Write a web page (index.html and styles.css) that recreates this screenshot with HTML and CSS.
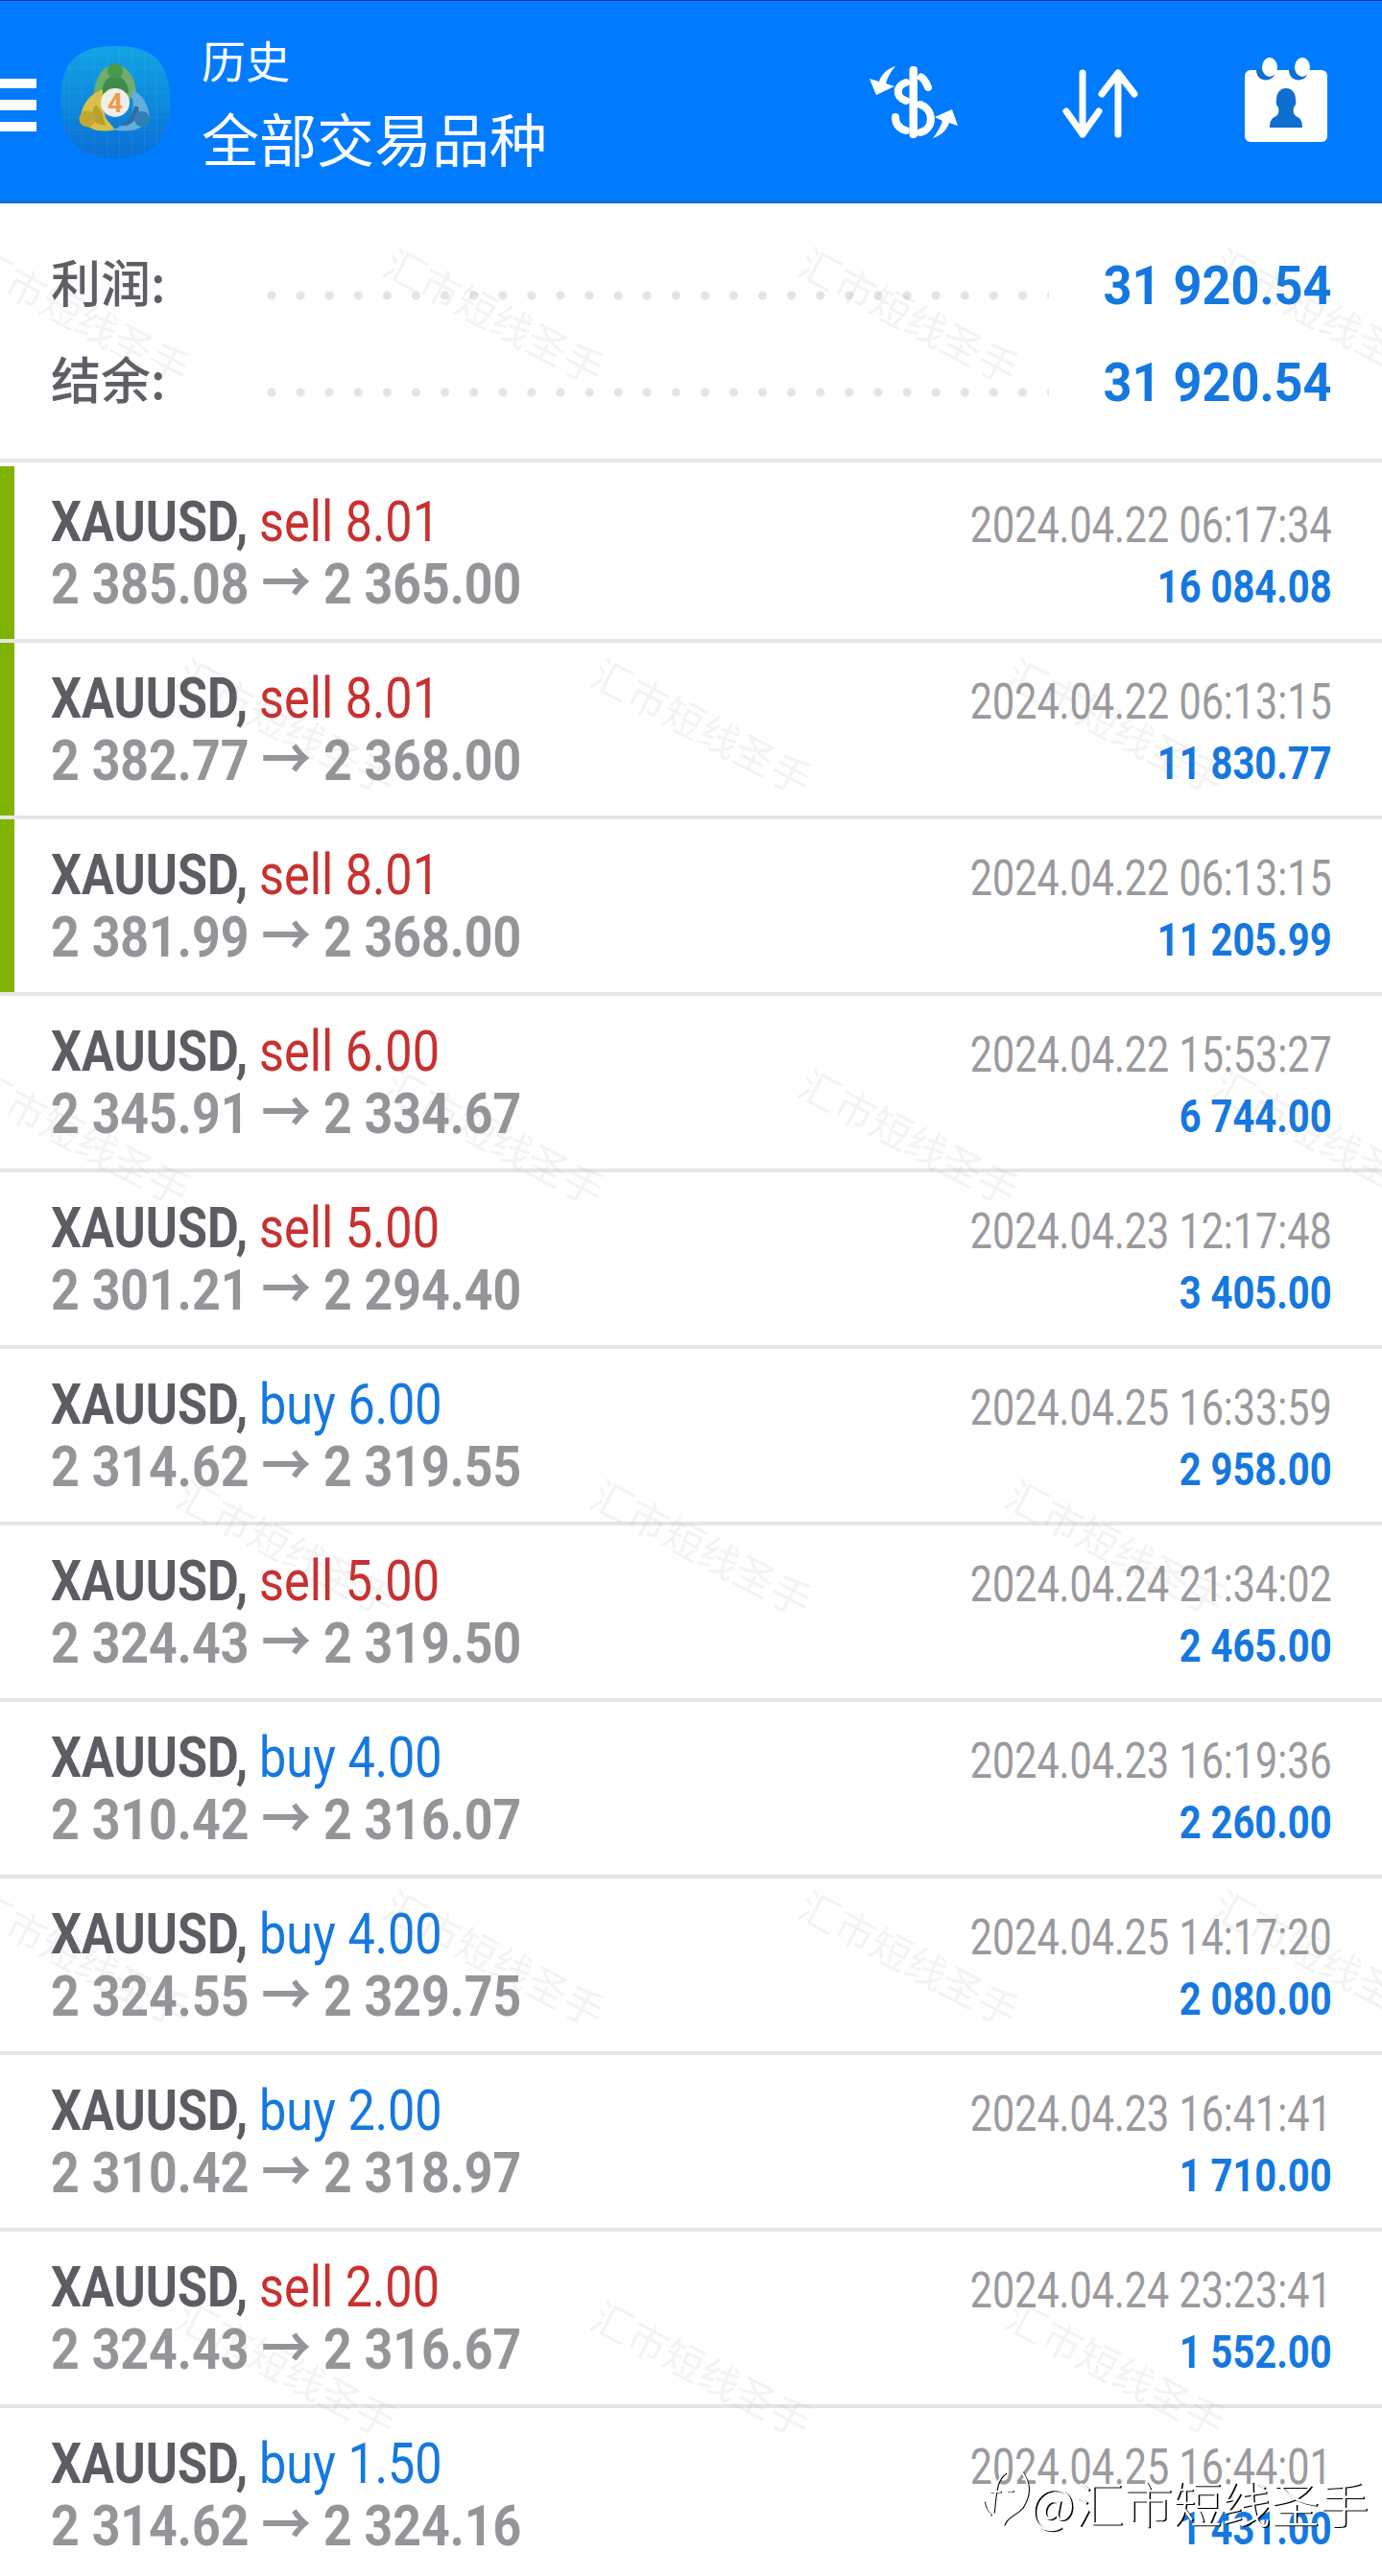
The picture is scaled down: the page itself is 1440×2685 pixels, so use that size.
FILE: index.html
```html
<!DOCTYPE html>
<html lang="zh">
<head>
<meta charset="utf-8">
<title>历史</title>
<link rel="stylesheet" href="styles.css">
</head>
<body>
<header class="topbar">
  <div class="burger"><i></i><i></i><i></i></div>
  <svg class="logo" viewBox="0 0 120 125">
    <defs>
      <linearGradient id="lg" x1="0" y1="0" x2="0" y2="1"><stop offset="0" stop-color="#12a4e4"/><stop offset="1" stop-color="#0a6ed6"/></linearGradient>
      <pattern id="grid" width="13" height="13" patternUnits="userSpaceOnUse"><path d="M13 0V13M0 13H13" stroke="#5cc0ee" stroke-opacity=".22" fill="none"/></pattern>
    </defs>
    <path d="M60 3C100 3 117 20 117 60C117 100 100 120 60 120C20 120 3 100 3 60C3 20 20 3 60 3Z" fill="url(#lg)"/>
    <path d="M60 3C100 3 117 20 117 60C117 100 100 120 60 120C20 120 3 100 3 60C3 20 20 3 60 3Z" fill="url(#grid)"/>
    <path d="M38 54C38 34 50 22 60 22C70 22 82 34 82 54L72 60H48Z" fill="#6fae6c"/>
    <path d="M46 52C46 42 52 34 60 34C68 34 74 42 74 52Z" fill="#3f8c4a"/>
    <circle cx="60" cy="29" r="8" fill="#48994f"/>
    <path d="M47 48C33 53 25 64 24 78C30 90 44 94 60 90L50 78L47 62Z" fill="#d6c04a"/>
    <path d="M40 64C35 70 35 78 41 84L50 86L46 72Z" fill="#b89f2e"/>
    <circle cx="31" cy="79" r="8.500" fill="#c2a733"/>
    <path d="M77 48C88 53 95 64 96 78C90 90 76 94 58 90C70 86 77 78 79 66Z" fill="#64aedb"/>
    <path d="M84 66C86 74 82 82 72 86L66 86C74 80 78 74 80 66Z" fill="#2e6f9e"/>
    <circle cx="88" cy="79" r="8" fill="#2f7fb4"/>
    <circle cx="60" cy="62" r="15" fill="#f1ede8"/>
    <text class="logo-four" x="60" y="72" text-anchor="middle">4</text>
  </svg>
  <div class="titles">
    <div class="title-small">历史</div>
    <div class="title-big">全部交易品种</div>
  </div>
  <svg class="tool tool-dollar" viewBox="0 0 100 90">
    <rect x="47.500" y="9" width="8.500" height="75" rx="4" fill="#fff"/>
    <g fill="none" stroke="#fff" stroke-width="8" stroke-linecap="round">
      <path d="M67 31C65 25 61 21 60 20.500"/>
      <path d="M44 26C34 29 32 41 44 45"/>
      <path d="M59 49C73 54 74 74 59 78"/>
      <path d="M33 62C33 69 37 74 44 76"/>
    </g>
    <path d="M33 9C24 12 18 18 16 25L6 22L13 39L32 30L23 27C25 20 28 15 33 9Z" fill="#fff"/>
    <path d="M72 84C81 81 87 75 89 68L98 71L92 54L74 62L82 66C80 72 77 78 72 84Z" fill="#fff"/>
  </svg>
  <svg class="tool tool-sort" viewBox="0 0 95 90">
    <g fill="none" stroke="#fff" stroke-width="7" stroke-linecap="round" stroke-linejoin="round">
      <path d="M28 16V80M11 56L28 80L45 56"/>
      <path d="M65 80V16M48 38L65 16L82 38"/>
    </g>
  </svg>
  <svg class="tool tool-cal" viewBox="0 0 100 90">
    <rect x="7" y="13" width="86" height="75" rx="6" fill="#fff"/>
    <path d="M19 13C19 27 39 27 39 13ZM53 13C53 27 73 27 73 13Z" fill="#0f6fd0"/>
    <ellipse cx="33" cy="10" rx="8" ry="10" fill="#fff"/>
    <ellipse cx="67" cy="10" rx="8" ry="10" fill="#fff"/>
    <path d="M50 32C57 32 60 38 60 44C61 47 60 50 58 52C57 57 58 60 62 62C66 64 67 68 67 73H33C33 68 34 64 38 62C42 60 43 57 42 52C40 50 39 47 40 44C40 38 43 32 50 32Z" fill="#0f6fd0"/>
  </svg>
</header>

<section class="summary">
  <div class="sum-row">
    <span class="sum-label">利润:</span>
    <span class="dots"></span>
    <span class="sum-value">31 920.54</span>
  </div>
  <div class="sum-row">
    <span class="sum-label">结余:</span>
    <span class="dots"></span>
    <span class="sum-value">31 920.54</span>
  </div>
</section>

<main class="list">
  <article class="row win">
    <div class="flag"></div>
    <div class="left"><div class="line1"><span class="sym">XAUUSD,</span><span class="side sell">sell 8.01</span></div><div class="price">2 385.08 → 2 365.00</div></div>
    <div class="right"><div class="date">2024.04.22 06:17:34</div><div class="profit">16 084.08</div></div>
  </article>
  <article class="row win">
    <div class="flag"></div>
    <div class="left"><div class="line1"><span class="sym">XAUUSD,</span><span class="side sell">sell 8.01</span></div><div class="price">2 382.77 → 2 368.00</div></div>
    <div class="right"><div class="date">2024.04.22 06:13:15</div><div class="profit">11 830.77</div></div>
  </article>
  <article class="row win">
    <div class="flag"></div>
    <div class="left"><div class="line1"><span class="sym">XAUUSD,</span><span class="side sell">sell 8.01</span></div><div class="price">2 381.99 → 2 368.00</div></div>
    <div class="right"><div class="date">2024.04.22 06:13:15</div><div class="profit">11 205.99</div></div>
  </article>
  <article class="row">
    <div class="flag"></div>
    <div class="left"><div class="line1"><span class="sym">XAUUSD,</span><span class="side sell">sell 6.00</span></div><div class="price">2 345.91 → 2 334.67</div></div>
    <div class="right"><div class="date">2024.04.22 15:53:27</div><div class="profit">6 744.00</div></div>
  </article>
  <article class="row">
    <div class="flag"></div>
    <div class="left"><div class="line1"><span class="sym">XAUUSD,</span><span class="side sell">sell 5.00</span></div><div class="price">2 301.21 → 2 294.40</div></div>
    <div class="right"><div class="date">2024.04.23 12:17:48</div><div class="profit">3 405.00</div></div>
  </article>
  <article class="row">
    <div class="flag"></div>
    <div class="left"><div class="line1"><span class="sym">XAUUSD,</span><span class="side buy">buy 6.00</span></div><div class="price">2 314.62 → 2 319.55</div></div>
    <div class="right"><div class="date">2024.04.25 16:33:59</div><div class="profit">2 958.00</div></div>
  </article>
  <article class="row">
    <div class="flag"></div>
    <div class="left"><div class="line1"><span class="sym">XAUUSD,</span><span class="side sell">sell 5.00</span></div><div class="price">2 324.43 → 2 319.50</div></div>
    <div class="right"><div class="date">2024.04.24 21:34:02</div><div class="profit">2 465.00</div></div>
  </article>
  <article class="row">
    <div class="flag"></div>
    <div class="left"><div class="line1"><span class="sym">XAUUSD,</span><span class="side buy">buy 4.00</span></div><div class="price">2 310.42 → 2 316.07</div></div>
    <div class="right"><div class="date">2024.04.23 16:19:36</div><div class="profit">2 260.00</div></div>
  </article>
  <article class="row">
    <div class="flag"></div>
    <div class="left"><div class="line1"><span class="sym">XAUUSD,</span><span class="side buy">buy 4.00</span></div><div class="price">2 324.55 → 2 329.75</div></div>
    <div class="right"><div class="date">2024.04.25 14:17:20</div><div class="profit">2 080.00</div></div>
  </article>
  <article class="row">
    <div class="flag"></div>
    <div class="left"><div class="line1"><span class="sym">XAUUSD,</span><span class="side buy">buy 2.00</span></div><div class="price">2 310.42 → 2 318.97</div></div>
    <div class="right"><div class="date">2024.04.23 16:41:41</div><div class="profit">1 710.00</div></div>
  </article>
  <article class="row">
    <div class="flag"></div>
    <div class="left"><div class="line1"><span class="sym">XAUUSD,</span><span class="side sell">sell 2.00</span></div><div class="price">2 324.43 → 2 316.67</div></div>
    <div class="right"><div class="date">2024.04.24 23:23:41</div><div class="profit">1 552.00</div></div>
  </article>
  <article class="row">
    <div class="flag"></div>
    <div class="left"><div class="line1"><span class="sym">XAUUSD,</span><span class="side buy">buy 1.50</span></div><div class="price">2 314.62 → 2 324.16</div></div>
    <div class="right"><div class="date">2024.04.25 16:44:01</div><div class="profit">1 431.00</div></div>
  </article>
</main>

<div class="marks">
  <div class="mark-row"><span class="mark">汇市短线圣手</span><span class="mark">汇市短线圣手</span><span class="mark">汇市短线圣手</span><span class="mark">汇市短线圣手</span></div>
  <div class="mark-row shift"><span class="mark">汇市短线圣手</span><span class="mark">汇市短线圣手</span><span class="mark">汇市短线圣手</span></div>
  <div class="mark-row"><span class="mark">汇市短线圣手</span><span class="mark">汇市短线圣手</span><span class="mark">汇市短线圣手</span><span class="mark">汇市短线圣手</span></div>
  <div class="mark-row shift"><span class="mark">汇市短线圣手</span><span class="mark">汇市短线圣手</span><span class="mark">汇市短线圣手</span></div>
  <div class="mark-row"><span class="mark">汇市短线圣手</span><span class="mark">汇市短线圣手</span><span class="mark">汇市短线圣手</span><span class="mark">汇市短线圣手</span></div>
  <div class="mark-row shift"><span class="mark">汇市短线圣手</span><span class="mark">汇市短线圣手</span><span class="mark">汇市短线圣手</span></div>
</div>

<div class="credit">
  <svg class="credit-logo" viewBox="0 0 56 70">
    <g class="credit-shadow">
      <path d="M25 5C17 10 15 20 13 45M10 24H20M28 23.500H33M43 4C50 14 52 26 43 40C36 48 26 50 24 58M3 35C4 42 7 46 10 48"/>
    </g>
    <g class="credit-ink">
      <path d="M25 5C17 10 15 20 13 45M10 24H20M28 23.500H33M43 4C50 14 52 26 43 40C36 48 26 50 24 58M3 35C4 42 7 46 10 48"/>
    </g>
  </svg>
  <span class="credit-text">@汇市短线圣手</span>
</div>
</body>
</html>
```

FILE: styles.css
```css
* { box-sizing: border-box; }
html, body { margin: 0; padding: 0; }
body {
  position: relative;
  width: 1440px;
  height: 2685px;
  overflow: hidden;
  background: #fff;
  font-family: Roboto, "Noto Sans CJK SC", sans-serif;
}

/* top bar */
.topbar {
  display: flex;
  align-items: center;
  height: 212px;
  padding-right: 50px;
  background: #007bff;
  border-top: 1px solid #1c2f9e;
  border-bottom: 3px solid #0f70c8;
}
.burger { display: flex; flex-direction: column; gap: 12px; width: 38px; margin-top: 9px; }
.burger i { display: block; height: 10.500px; background: #fff; }
.logo { width: 120px; height: 125px; margin: 5px 0 0 22px; flex: none; }
.logo-four { font: 700 28px Roboto, sans-serif; fill: #ee9a4a; }
.titles { margin: 6px 0 0 30px; color: #fff; font-family: "Noto Sans CJK SC", sans-serif; font-weight: 400; }
.title-small { font-size: 46px; line-height: 70px; }
.title-big { font-size: 60px; line-height: 94px; white-space: nowrap; }
.tool { flex: none; height: 90px; }
.tool-dollar { width: 100px; margin-left: auto; }
.tool-sort { width: 95px; margin-left: 100px; }
.tool-cal { width: 100px; margin-left: 95px; }

/* summary */
.summary { height: 266px; padding-top: 35px; }
.sum-row { display: flex; align-items: center; height: 101px; padding: 0 52px 0 53px; }
.sum-label {
  width: 215px;
  flex: none;
  margin-top: -10px;
  font: 500 52px "Noto Sans CJK SC", sans-serif;
  color: #5e5f65;
}
.dots {
  width: 825px;
  height: 10px;
  margin-top: 21px;
  flex: none;
  background-image: radial-gradient(circle at 15px 5px, #e4e4e4 4px, rgba(228, 228, 228, 0) 5px);
  background-size: 30.100px 10px;
}
.sum-value {
  margin-left: auto;
  white-space: nowrap;
  font-size: 55px;
  font-weight: 700;
  color: #1578e0;
  transform: scaleX(.95);
  transform-origin: right center;
}

/* rows */
.list { border-top: 4px solid #e6e6e6; }
.row {
  display: flex;
  height: 184px;
  border-bottom: 4px solid #e6e6e6;
  overflow: hidden;
}
.row:first-child { margin-top: 4px; }
.row:last-child { border-bottom: 0; }
.flag { width: 15px; flex: none; }
.win .flag { background: #80b300; }
.left { padding: 25px 0 0 38px; flex: 1; }
.line1 { display: flex; height: 65px; line-height: 65px; font-size: 60px; white-space: nowrap; }
.sym { width: 217px; flex: none; font-weight: 700; color: #5c5c62; transform: scaleX(.84); transform-origin: left center; }
.side { transform: scaleX(.84); transform-origin: left center; }
.sell { color: #c9302f; }
.buy { color: #1578e0; }
.price {
  height: 65px;
  line-height: 65px;
  font-size: 60px;
  font-weight: 700;
  color: #939598;
  white-space: nowrap;
  transform: scaleX(.864);
  transform-origin: left center;
}
.right { padding: 29px 52px 0 0; text-align: right; }
.date {
  line-height: 65px;
  font-size: 52px;
  color: #9a9a9e;
  white-space: nowrap;
  transform: scaleX(.794);
  transform-origin: right center;
}
.profit {
  line-height: 64px;
  font-size: 48px;
  font-weight: 700;
  color: #1578e0;
  white-space: nowrap;
  transform: scaleX(.832);
  transform-origin: right center;
}

/* watermark layer */
.marks {
  position: absolute;
  top: 114px;
  left: 0;
  width: 1440px;
  overflow: hidden;
  pointer-events: none;
}
.mark-row { display: flex; height: 428px; margin-left: -132px; }
.mark-row.shift { padding-left: 216px; }
.mark {
  flex: none;
  width: 432px;
  height: 428px;
  text-align: center;
  font: 42px/428px "Noto Sans CJK SC", sans-serif;
  color: rgba(135, 135, 135, .11);
  transform: rotate(28deg);
}

/* reposted credit */
.credit {
  position: absolute;
  right: 14px;
  bottom: 40px;
  display: flex;
  align-items: center;
  gap: -4px;
}
.credit-logo { width: 56px; height: 70px; margin-right: -4px; }
.credit-shadow, .credit-ink { fill: none; stroke-width: 2; stroke-linecap: round; }
.credit-shadow { stroke: #000; transform: translate(1px, .5px); }
.credit-ink { stroke: #fff; }
.credit-text {
  font: 300 51px "Noto Sans CJK SC", sans-serif;
  color: #fff;
  text-shadow: 1.500px 1px 0 #000;
  white-space: nowrap;
}
```
